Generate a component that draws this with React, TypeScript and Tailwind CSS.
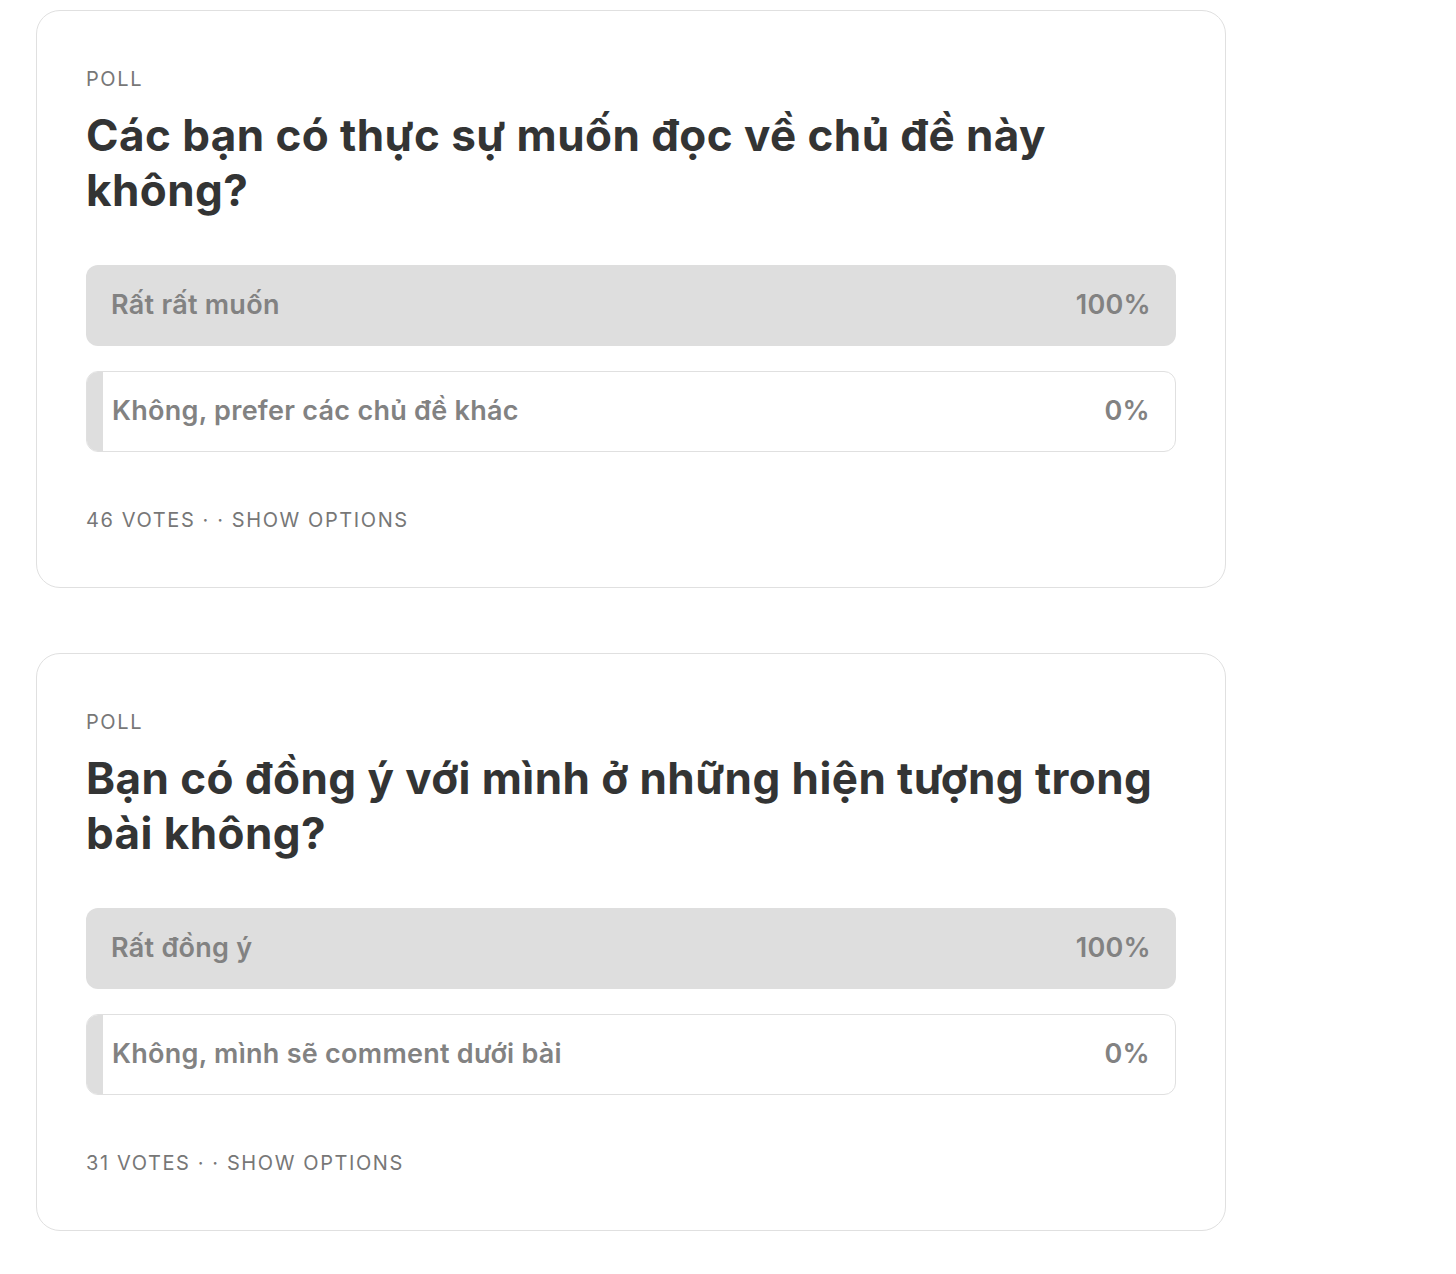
const font = { fontFamily: 'Inter, "Noto Sans", sans-serif' };

type Option = { label: string; pct: number };
type Poll = { question: string; options: Option[]; votes: number };

const polls: Poll[] = [
  {
    question: 'Các bạn có thực sự muốn đọc về chủ đề này không?',
    options: [
      { label: 'Rất rất muốn', pct: 100 },
      { label: 'Không, prefer các chủ đề khác', pct: 0 },
    ],
    votes: 46,
  },
  {
    question: 'Bạn có đồng ý với mình ở những hiện tượng trong bài không?',
    options: [
      { label: 'Rất đồng ý', pct: 100 },
      { label: 'Không, mình sẽ comment dưới bài', pct: 0 },
    ],
    votes: 31,
  },
];

function PollOption({ option }: { option: Option }) {
  const full = option.pct === 100;
  return (
    <div
      className={`relative h-[81px] rounded-[12px] overflow-hidden ${
        full ? 'bg-[#dedede]' : 'bg-white border-[1.5px] border-[#e0e0e0]'
      }`}
    >
      {!full && <div className="absolute left-0 top-0 bottom-0 w-[16px] bg-[#dedede]" />}
      <div className="relative h-full flex items-center justify-between px-[25px] text-[27px] tracking-[0.01em] font-semibold text-[#828282]">
        <span>{option.label}</span>
        <span>{option.pct}%</span>
      </div>
    </div>
  );
}

function PollCard({ poll }: { poll: Poll }) {
  return (
    <div className="w-[1190px] rounded-[24px] border-[1.5px] border-[#e0e0e0] bg-white pl-[49px] pr-[49px] pt-[56px] pb-[55px]">
      <div className="text-[20px] leading-[24px] tracking-[0.08em] text-[#777]">POLL</div>
      <h2 className="mt-[17px] text-[44px] leading-[55px] font-bold text-[#333434] tracking-[0.01em]">
        {poll.question}
      </h2>
      <div className="mt-[47px] flex flex-col gap-[25px]">
        {poll.options.map((o) => (
          <PollOption key={o.label} option={o} />
        ))}
      </div>
      <div className="mt-[56px] text-[20px] leading-[24px] tracking-[0.08em] text-[#777]">
        {poll.votes} VOTES · · SHOW OPTIONS
      </div>
    </div>
  );
}

export default function App() {
  return (
    <div className="min-h-[1274px] bg-white pl-[36px] pt-[10px] flex flex-col gap-[65px]" style={font}>
      {polls.map((p) => (
        <PollCard key={p.question} poll={p} />
      ))}
    </div>
  );
}
